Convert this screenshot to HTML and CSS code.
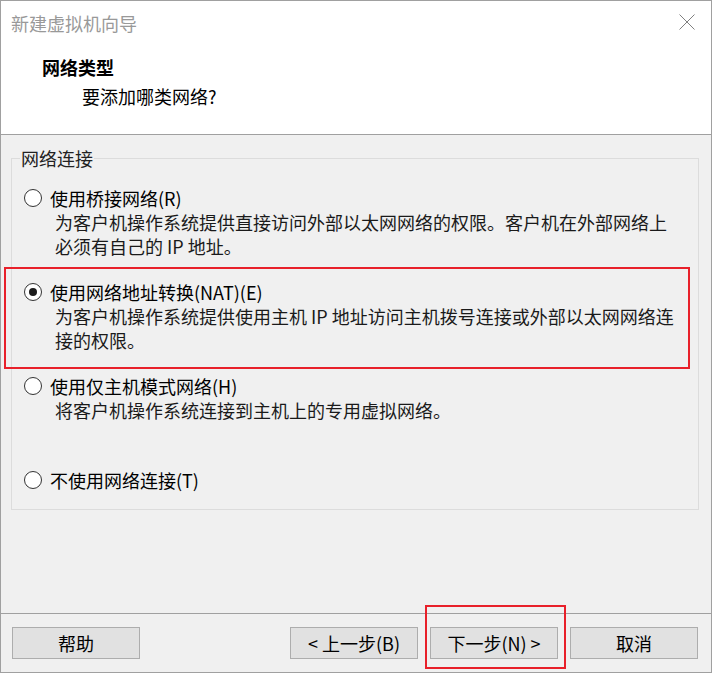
FILE: index.html
```html
<!DOCTYPE html>
<html lang="zh-CN">
<head>
<meta charset="utf-8">
<title>新建虚拟机向导</title>
<link rel="stylesheet" href="styles.css">
</head>
<body>
<div class="window">
  <div class="header">
    <div class="titlebar">
      <span class="title">新建虚拟机向导</span>
      <svg class="close" width="16" height="16" viewBox="0 0 16 16"><path d="M0.5 0.5 L15.5 15.5 M15.5 0.5 L0.5 15.5" stroke="#808080" stroke-width="1" fill="none"/></svg>
    </div>
    <div class="head-title">网络类型</div>
    <div class="head-sub">要添加哪类网络?</div>
  </div>
  <div class="content">
    <fieldset class="group">
      <legend class="legend">网络连接</legend>
      <div class="option">
        <div class="opt-label"><span class="radio"></span>使用桥接网络(R)</div>
        <div class="desc">为客户机操作系统提供直接访问外部以太网网络的权限。客户机在外部网络上<br>必须有自己的 IP 地址。</div>
      </div>
      <div class="option">
        <div class="opt-label"><span class="radio checked"></span>使用网络地址转换(NAT)(E)</div>
        <div class="desc">为客户机操作系统提供使用主机 IP 地址访问主机拨号连接或外部以太网网络连<br>接的权限。</div>
      </div>
      <div class="option">
        <div class="opt-label"><span class="radio"></span>使用仅主机模式网络(H)</div>
        <div class="desc">将客户机操作系统连接到主机上的专用虚拟网络。</div>
      </div>
      <div class="option last">
        <div class="opt-label"><span class="radio"></span>不使用网络连接(T)</div>
      </div>
    </fieldset>
  </div>
  <div class="footer">
    <button class="btn">帮助</button>
    <div class="spacer"></div>
    <button class="btn">&lt; 上一步(B)</button>
    <button class="btn">下一步(N) &gt;</button>
    <button class="btn">取消</button>
  </div>
  <div class="mark mark-nat"></div>
  <div class="mark mark-next"></div>
</div>
</body>
</html>
```

FILE: styles.css
```css
* { box-sizing: border-box; }
html, body { margin: 0; padding: 0; background: #f0f0f0; }
body {
  font-family: "Noto Sans CJK SC", "Noto Sans", sans-serif;
  font-size: 18px;
  color: #000;
}
.window {
  position: relative;
  width: 712px;
  height: 673px;
  border: 1px solid #a0a0a0;
  display: flex;
  flex-direction: column;
  background: #f0f0f0;
}
.header {
  height: 134px;
  flex: none;
  background: #fff;
  border-bottom: 1px solid #a0a0a0;
}
.titlebar {
  height: 43px;
  display: flex;
  align-items: center;
  justify-content: space-between;
  padding: 0 16px 0 10px;
}
.title {
  color: #999;
  font-size: 18px;
  line-height: 24px;
}
.close { display: block; margin-top: -2px; }
.head-title {
  margin-top: 11px;
  padding-left: 41px;
  font-weight: bold;
  line-height: 24px;
}
.head-sub {
  margin-top: 5px;
  padding-left: 81px;
  line-height: 24px;
}
.content {
  flex: 1;
  padding: 11px 12px 0 10px;
}
.group {
  margin: 0;
  border: 1px solid #dcdcdc;
  padding: 16px 12px 17px 12px;
  min-width: 0;
}
.legend {
  margin-left: -4px;
  padding: 0 1px;
  line-height: 24px;
  color: #222;
}
.option {
  height: 94px;
  white-space: nowrap;
}
.option.last { height: 24px; }
.opt-label {
  display: flex;
  align-items: center;
  line-height: 24px;
  height: 24px;
}
.radio {
  width: 18px;
  height: 18px;
  border: 1px solid #333;
  border-radius: 50%;
  background: #fff;
  margin-right: 8px;
  flex: none;
  display: flex;
  align-items: center;
  justify-content: center;
}
.radio.checked::after {
  content: "";
  width: 8px;
  height: 8px;
  border-radius: 50%;
  background: #1a1a1a;
}
.desc {
  padding-left: 31px;
  line-height: 24px;
  color: #1a1a1a;
}
.footer {
  height: 59px;
  flex: none;
  border-top: 1px solid #a0a0a0;
  display: flex;
  align-items: flex-start;
  gap: 12px;
  padding: 13px 13px 0 11px;
}
.spacer { flex: 1; }
.btn {
  width: 128px;
  height: 32px;
  background: #e1e1e1;
  border: 1px solid #adadad;
  font-family: "Noto Sans CJK SC", "Noto Sans", sans-serif;
  font-size: 18px;
  color: #000;
  padding: 0;
  line-height: 24px;
}
.mark {
  position: absolute;
  border: 2px solid #e8202a;
  pointer-events: none;
}
.mark-nat { left: 3px; top: 266px; width: 686px; height: 102px; }
.mark-next { left: 424px; top: 604px; width: 141px; height: 64px; }
```
